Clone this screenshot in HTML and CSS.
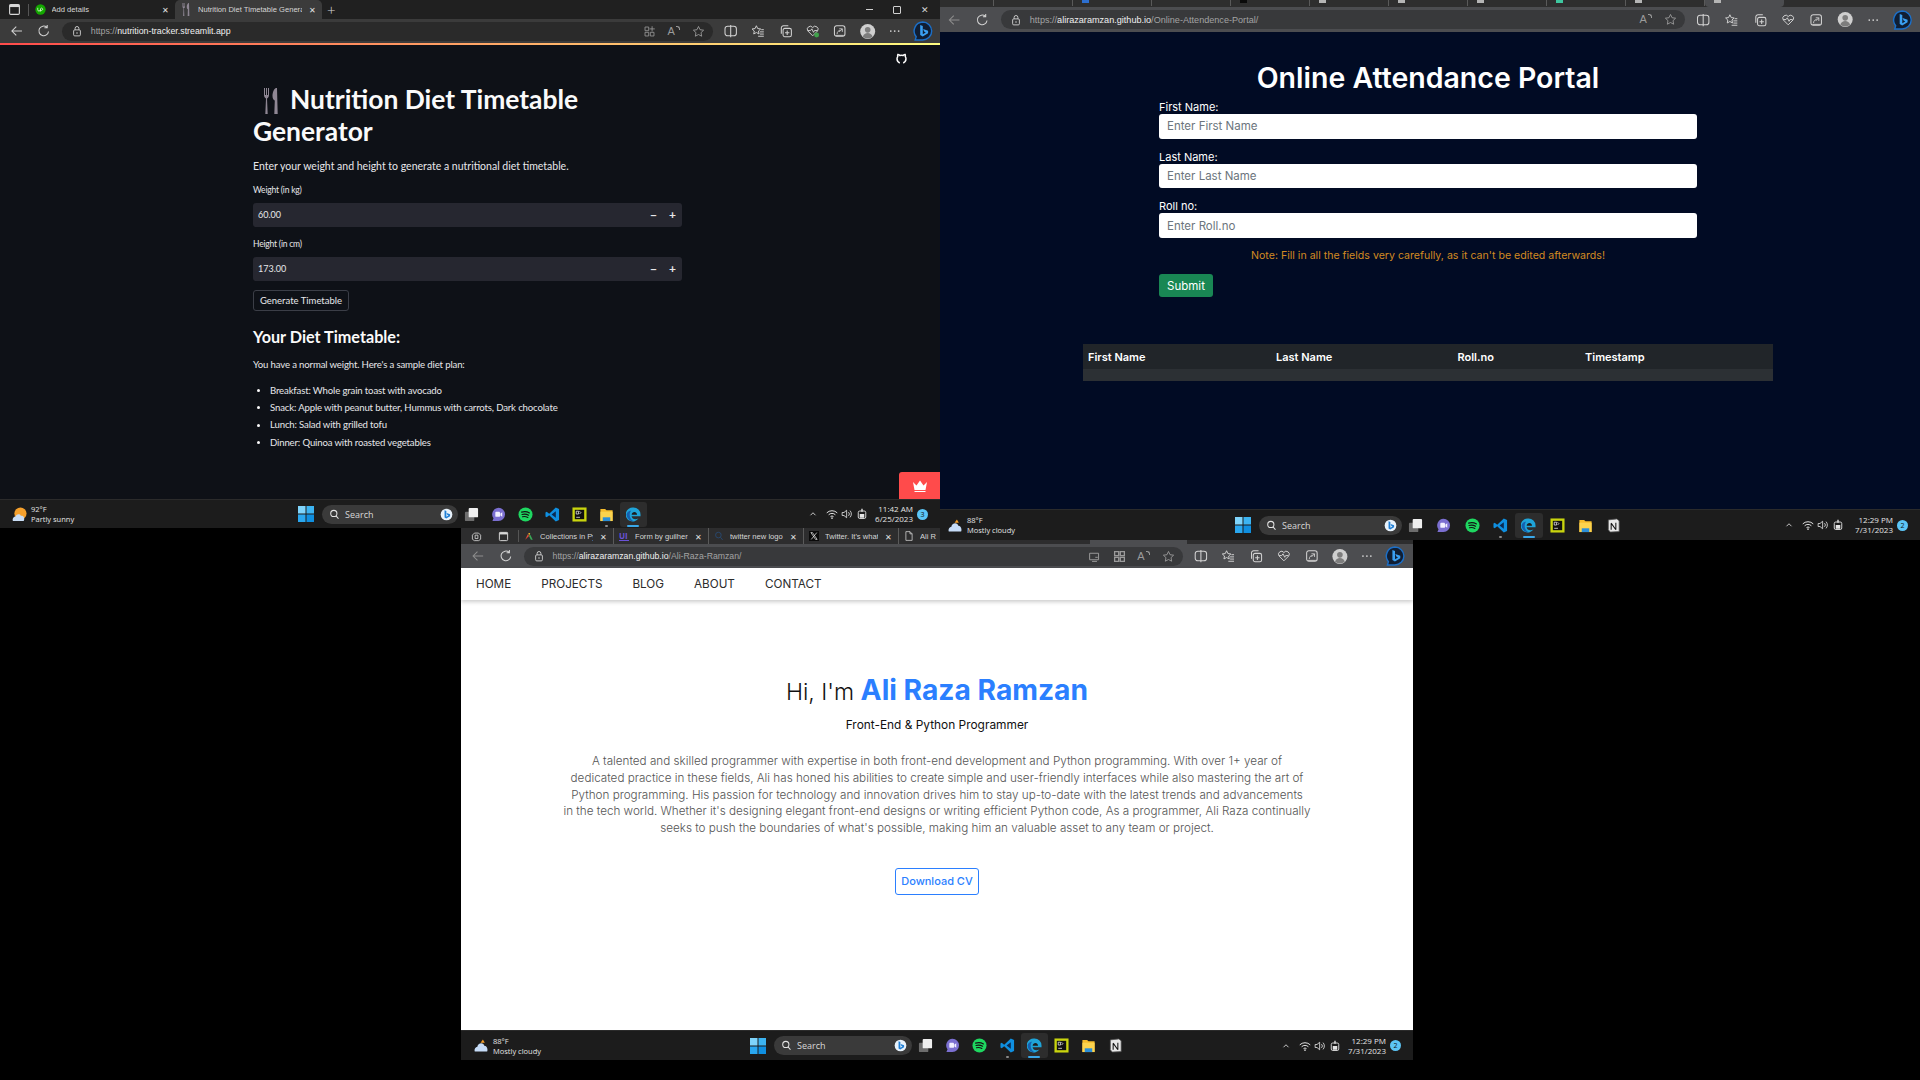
FILE: index.html
```html
<!DOCTYPE html>
<html lang="en">
<head>
    <meta charset="UTF-8">
    <meta name="viewport" content="width=device-width, initial-scale=1.0">
    <title>Project screenshots</title>
    <link rel="stylesheet" href="styles.css">
</head>
<body>
    <svg class="sprites" width="0" height="0">
        <symbol id="i-sidebar" viewBox="0 0 16 16"><rect x="2" y="2" width="12" height="12" rx="1.5" fill="none" stroke="currentColor" stroke-width="1.4"/><rect x="2" y="2" width="12" height="3" fill="currentColor"/></symbol>
        <symbol id="i-workspace" viewBox="0 0 16 16"><path d="M5 3h6l3 3v6l-3 2H5l-3-2V6z M6 6h4v5H6z" fill="none" stroke="currentColor" stroke-width="1.2"/></symbol>
        <symbol id="i-back" viewBox="0 0 16 16"><path d="M14 8H2.5M7.5 3L2.5 8l5 5" fill="none" stroke="currentColor" stroke-width="1.2"/></symbol>
        <symbol id="i-reload" viewBox="0 0 16 16"><path d="M13.5 8.5A5.5 5.5 0 1 1 11.5 3.6M12 1v3.2H8.8" fill="none" stroke="currentColor" stroke-width="1.2"/></symbol>
        <symbol id="i-lock" viewBox="0 0 16 16"><rect x="3.5" y="6.5" width="9" height="8" rx="1.5" fill="none" stroke="currentColor" stroke-width="1.2"/><path d="M5.5 6.5V4.5a2.5 2.5 0 0 1 5 0v2" fill="none" stroke="currentColor" stroke-width="1.2"/><circle cx="8" cy="10.5" r="1" fill="currentColor"/></symbol>
        <symbol id="i-apps" viewBox="0 0 16 16"><path d="M2.5 2.5h4.5v4.5h-4.5z M2.5 9h4.5v4.5h-4.5z M9 9h4.5v4.5H9z M11.2 1.5v6.5 M8 4.8h6.5" fill="none" stroke="currentColor" stroke-width="1"/></symbol>
        <symbol id="i-qr" viewBox="0 0 16 16"><path d="M2 2h5v5H2z M9 2h5v5H9z M2 9h5v5H2z M9 9h5v5H9z" fill="none" stroke="currentColor" stroke-width="1.6"/></symbol>
        <symbol id="i-cast" viewBox="0 0 16 16"><path d="M2 12V4h11v8z M5 14h6 M9 9h3" fill="none" stroke="currentColor" stroke-width="1.2"/></symbol>
        <symbol id="i-star" viewBox="0 0 16 16"><path d="M8 1.8l1.9 4 4.4.6-3.2 3 .8 4.4L8 11.7l-3.9 2.1.8-4.4-3.2-3 4.4-.6z" fill="none" stroke="currentColor" stroke-width="1.1" stroke-linejoin="round"/></symbol>
        <symbol id="i-split" viewBox="0 0 16 16"><rect x="1.5" y="2.5" width="13" height="11" rx="3" fill="none" stroke="currentColor" stroke-width="1.2"/><path d="M8 1v14" stroke="currentColor" stroke-width="1.2"/></symbol>
        <symbol id="i-favs" viewBox="0 0 16 16"><path d="M6.5 2l1.5 3.2 3.4.5-2.500 2.300.6 3.400-3-1.700-3 1.700.6-3.400L1.600 5.700 5 5.200z" fill="none" stroke="currentColor" stroke-width="1.1" stroke-linejoin="round"/><path d="M10.5 9h4.5 M10.5 11.5h4.5 M8.5 14h6.5 M12 6.5h3" stroke="currentColor" stroke-width="1.1"/></symbol>
        <symbol id="i-collect" viewBox="0 0 16 16"><path d="M3 11V4.5A2.5 2.5 0 0 1 5.5 2H11" fill="none" stroke="currentColor" stroke-width="1.2"/><rect x="5" y="5" width="9.5" height="9.5" rx="2" fill="none" stroke="currentColor" stroke-width="1.2"/><path d="M9.7 7.5v5 M7.2 10h5" stroke="currentColor" stroke-width="1.2"/></symbol>
        <symbol id="i-health" viewBox="0 0 16 16"><path d="M8 13.5L2.5 8A3.3 3.3 0 0 1 8 4a3.3 3.3 0 0 1 5.5 4z M2.500 7.500h3l1.500-2 2 4 1-2h3" fill="none" stroke="currentColor" stroke-width="1.1"/></symbol>
        <symbol id="i-health-on" viewBox="0 0 16 16"><path d="M8 13.5L2.5 8A3.3 3.3 0 0 1 8 4a3.3 3.3 0 0 1 5.5 4z M2.500 7.500h3l1.500-2 2 4 1-2h3" fill="none" stroke="currentColor" stroke-width="1.1"/><circle cx="12.5" cy="12.5" r="2.8" fill="#3fa14a"/></symbol>
        <symbol id="i-shot" viewBox="0 0 16 16"><rect x="2" y="2" width="12" height="12" rx="2.5" fill="none" stroke="currentColor" stroke-width="1.2"/><path d="M5 11.5c0-2.5 1.5-4 3.500-4 M7.500 5.500l3.500 0v3.500 M11 5.500L7.500 9 M3.500 13h9" fill="none" stroke="currentColor" stroke-width="1"/></symbol>
        <symbol id="i-avatar" viewBox="0 0 16 16"><circle cx="8" cy="8" r="8" fill="#cfcfcf"/><circle cx="8" cy="6.2" r="3" fill="#7d7d7d"/><path d="M2.8 13.5c.8-2.800 2.800-4 5.200-4s4.400 1.200 5.200 4A8 8 0 0 1 2.800 13.500z" fill="#7d7d7d"/></symbol>
        <symbol id="i-dots" viewBox="0 0 16 16"><circle cx="3.5" cy="8" r="1" fill="currentColor"/><circle cx="8" cy="8" r="1" fill="currentColor"/><circle cx="12.5" cy="8" r="1" fill="currentColor"/></symbol>
        <symbol id="i-bing" viewBox="0 0 20 20"><path d="M10 1a9 9 0 0 1 0 18H2.5l1-3.300A9 9 0 0 1 10 1z" fill="#101e33" stroke="#1b6fc8" stroke-width="1.4"/><path d="M7.5 4l2.600 1v8.200l3-1.800-1.700-.8-1-2.600 5 1.700v2.600l-5.400 3.200-2.500-1.400z" fill="#3aa0f2"/></symbol>
        <symbol id="i-bing-sm" viewBox="0 0 20 20"><circle cx="10" cy="10" r="9" fill="#e8f2fb"/><path d="M7 3.500l2.800 1v9l3.300-2-1.800-.9-1.100-2.800 5.300 1.800v2.900l-5.900 3.500-2.600-1.500z" fill="#1f7fd6"/></symbol>
        <symbol id="i-start" viewBox="0 0 16 16"><path d="M0 0h7.500v7.500H0z" fill="#7fd4fb"/><path d="M8.500 0H16v7.500H8.500z" fill="#3cb4f2"/><path d="M0 8.500h7.500V16H0z" fill="#2aa7ef"/><path d="M8.500 8.500H16V16H8.500z" fill="#0f8fe0"/></symbol>
        <symbol id="i-search" viewBox="0 0 16 16"><circle cx="7" cy="6.5" r="4.5" fill="none" stroke="currentColor" stroke-width="1.5"/><path d="M10.300 10l3.500 4.200" stroke="currentColor" stroke-width="1.5"/></symbol>
        <symbol id="i-taskview" viewBox="0 0 16 16"><rect x="1" y="5" width="10" height="10" rx="1" fill="#6d6d6d"/><rect x="5" y="1" width="10" height="10" rx="1" fill="#efefef"/></symbol>
        <symbol id="i-chat" viewBox="0 0 16 16"><path d="M8 .8a7 7 0 0 1 0 14H1.500l1.200-2.800A7 7 0 0 1 8 .8z" fill="#7b6fd0"/><rect x="4.6" y="5" width="5" height="5.5" rx="1" fill="#f2f0ff"/><path d="M10 7l2-1.300v4.600l-2-1.300z" fill="#f2f0ff"/></symbol>
        <symbol id="i-spotify" viewBox="0 0 16 16"><circle cx="8" cy="8" r="7.5" fill="#1ed760"/><path d="M3.800 5.500c2.800-.8 5.900-.6 8.400.8 M4.300 8c2.300-.6 4.900-.4 7 .8 M4.800 10.400c1.900-.5 3.900-.3 5.700.7" fill="none" stroke="#121212" stroke-width="1.2" stroke-linecap="round"/></symbol>
        <symbol id="i-vscode" viewBox="0 0 16 16"><path d="M11.500.5L15 2.200v11.600l-3.500 1.700-7-6.700L1.800 11 .5 10.200V5.800L1.800 5l2.700 2.200z" fill="#0f8fe0"/><path d="M11.500 4.500L7 8l4.500 3.500z" fill="#0b2a52"/></symbol>
        <symbol id="i-edge" viewBox="0 0 16 16"><path d="M8 .5a7.500 7.500 0 0 1 7.500 7.500v1.800H6c.2 2 2 3.200 4 3.200 1.200 0 2.400-.3 3.400-.9A7.500 7.500 0 1 1 8 .5z" fill="#1fa4d8"/><path d="M6 8.300c.2-2 1.500-3 3-3s2.600.8 2.800 3z" fill="#1c1c1c"/><path d="M.6 8C1.300 5 3.500 3.700 5.500 4 3.600 5.800 3.300 10 5.400 13c1 1.400 2.500 2 3.600 2.400A7.500 7.500 0 0 1 .6 8z" fill="#1460b0"/></symbol>
        <symbol id="i-pycharm" viewBox="0 0 16 16"><rect x=".5" y=".5" width="15" height="15" fill="#c9d40e"/><rect x="3" y="3" width="10" height="10" fill="#101010"/><path d="M4.500 4.500h2.500v3H4.500z M8 4.500l1.500 1.500L8 7.500 M4.500 11h4" fill="none" stroke="#f2f2f2" stroke-width=".8"/></symbol>
        <symbol id="i-files" viewBox="0 0 16 16"><path d="M1.500 2h5l1.500 1.500h6.500V15h-13z" fill="#f6bc2c"/><rect x="1.5" y="5" width="13" height="10" fill="#fcd34e"/><rect x="4" y="11" width="8" height="4" fill="#2b8fd9"/></symbol>
        <symbol id="i-notion" viewBox="0 0 16 16"><path d="M2.500 2l9-1 2.500 2v11.500l-9.500.5-2-2.500z" fill="#e8e8e8" stroke="#555" stroke-width=".8"/><path d="M5.500 5.500v7 M5.500 5.500l5 7 M10.500 5v7.500" fill="none" stroke="#111" stroke-width="1.1"/></symbol>
        <symbol id="i-sun" viewBox="0 0 16 16"><circle cx="9" cy="7" r="6.5" fill="#f5a02c"/><path d="M1 15c-1-3 1-5 3-5 .5-2.500 4.500-3 5.500-.5 3-.5 4.500 2.500 3 5.500z" fill="#c9ddf5"/></symbol>
        <symbol id="i-cloud" viewBox="0 0 16 16"><path d="M9.500 1.500l2 3.500H7z" fill="#f5a02c"/><path d="M.8 14.500c-.8-3 1-5 2.800-5.200C4 5.500 9.500 4 11 8.200c2.500-.2 4.200 3.500 3 6.300z" fill="#c6dcf8"/></symbol>
        <symbol id="i-chevron" viewBox="0 0 16 16"><path d="M3 10.500L8 5.500l5 5" fill="none" stroke="currentColor" stroke-width="1.7"/></symbol>
        <symbol id="i-wifi" viewBox="0 0 16 16"><path d="M1 6.500a10 10 0 0 1 14 0 M3.500 9a6.500 6.500 0 0 1 9 0 M6 11.500a3 3 0 0 1 4 0" fill="none" stroke="currentColor" stroke-width="1.3"/><circle cx="8" cy="13.5" r="1.1" fill="currentColor"/></symbol>
        <symbol id="i-volume" viewBox="0 0 16 16"><path d="M1.500 6v4h2.500l3.500 3V3L4 6z" fill="none" stroke="currentColor" stroke-width="1.1"/><path d="M10 5.500a3.500 3.500 0 0 1 0 5 M12 3.500a6.500 6.500 0 0 1 0 9" fill="none" stroke="currentColor" stroke-width="1.1"/></symbol>
        <symbol id="i-battery" viewBox="0 0 16 16"><rect x="3" y="4" width="10" height="10" rx="2" fill="none" stroke="currentColor" stroke-width="1.2"/><rect x="5" y="8" width="6" height="5" fill="currentColor"/><path d="M8 1v4" stroke="currentColor" stroke-width="1.8"/></symbol>
        <symbol id="i-fork" viewBox="0 0 20 26"><path d="M2 0v7c0 2 1 3 2 3.500L3.300 26h2.400L5 10.500C6 10 7 9 7 7V0H6v7H5V0H4v7H3V0z" fill="#8f8794"/><path d="M14 0c-2.500 1-3.500 5-3.500 8 0 2.500 1 4 2.300 4.500L12.300 26h3.400L15 0z" fill="#8f8794"/></symbol>
        <symbol id="i-github" viewBox="0 0 16 16"><path d="M5.500 14.500C3 13.500 1.500 11 1.500 8.500c0-1.200.4-2.300 1-3.200-.2-1-.1-2.200.2-3 1 0 2 .5 2.800 1.200a9 9 0 0 1 5 0c.8-.7 1.800-1.200 2.800-1.200.3.8.4 2 .2 3 .6.9 1 2 1 3.200 0 2.500-1.500 5-4 6" fill="none" stroke="currentColor" stroke-width="2.2"/></symbol>
        <symbol id="i-crown" viewBox="0 0 16 12"><path d="M1 2l3.500 3.500L8 .5l3.500 5L15 2l-1.500 8h-11z M2.500 11h11v1h-11z" fill="currentColor"/></symbol>
        <symbol id="i-upwork" viewBox="0 0 16 16"><circle cx="8" cy="8" r="7.5" fill="#14a800"/><path d="M4 5.500v3a1.800 1.800 0 0 0 3.600 0M8 11V6.800a1.700 1.700 0 1 1 .2 2" fill="none" stroke="#fff" stroke-width="1"/></symbol>
        <symbol id="i-gcolor" viewBox="0 0 16 16"><path d="M2 14L6 5l2 3z" fill="#e34a3a"/><path d="M7 3h3l-2 5z" fill="#f5b52e"/><path d="M8 8l3 6h3L10 6z" fill="#3aa757"/></symbol>
        <symbol id="i-doc" viewBox="0 0 16 16"><path d="M3 1h6.500L13 4.500V15H3z M9.500 1v3.500H13" fill="none" stroke="currentColor" stroke-width="1.2"/></symbol>
        <symbol id="i-x" viewBox="0 0 16 16"><rect width="16" height="16" fill="#0a0a0a"/><path d="M3 2.500h2.500l7.500 11h-2.500z M12.500 2.500L3.500 13.500" fill="none" stroke="#f2f2f2" stroke-width="1.1"/></symbol>
    </svg>

    <!-- top left: streamlit app -->
    <section class="window win-diet">
        <div class="tabstrip">
            <svg class="ico tabstrip-ico"><use href="#i-sidebar"/></svg>
            <span class="tab-divider"></span>
            <div class="tab"><svg class="favicon"><use href="#i-upwork"/></svg><span class="tab-title">Add details</span><span class="tab-close">✕</span></div>
            <div class="tab tab-active"><svg class="favicon favicon-fork"><use href="#i-fork"/></svg><span class="tab-title">Nutrition Diet Timetable Genera</span><span class="tab-close">✕</span></div>
            <span class="tab-new">+</span>
            <div class="window-controls">
                <span class="win-min"></span>
                <span class="win-max"></span>
                <span class="win-close">✕</span>
            </div>
        </div>
        <div class="toolbar">
            <svg class="tool"><use href="#i-back"/></svg>
            <svg class="tool"><use href="#i-reload"/></svg>
            <div class="address">
                <svg class="ico address-lock"><use href="#i-lock"/></svg>
                <span class="url"><span class="url-dim">https://</span>nutrition-tracker.streamlit.app</span>
                <div class="address-tools">
                    <svg class="ico"><use href="#i-apps"/></svg>
                    <span class="read">A</span>
                    <svg class="ico"><use href="#i-star"/></svg>
                </div>
            </div>
            <svg class="tool"><use href="#i-split"/></svg>
            <svg class="tool"><use href="#i-favs"/></svg>
            <svg class="tool"><use href="#i-collect"/></svg>
            <svg class="tool"><use href="#i-health-on"/></svg>
            <svg class="tool"><use href="#i-shot"/></svg>
            <svg class="tool tool-avatar"><use href="#i-avatar"/></svg>
            <svg class="tool"><use href="#i-dots"/></svg>
            <svg class="tool tool-bing"><use href="#i-bing"/></svg>
        </div>
        <div class="st-decoration"></div>
        <main class="st-page">
            <svg class="st-github"><use href="#i-github"/></svg>
            <h1 class="st-title"><svg class="st-fork"><use href="#i-fork"/></svg>Nutrition Diet Timetable Generator</h1>
            <p class="st-text st-intro">Enter your weight and height to generate a nutritional diet timetable.</p>
            <label class="st-label">Weight (in kg)</label>
            <div class="st-number"><span class="st-value">60.00</span><span class="st-step">−</span><span class="st-step">+</span></div>
            <label class="st-label">Height (in cm)</label>
            <div class="st-number"><span class="st-value">173.00</span><span class="st-step">−</span><span class="st-step">+</span></div>
            <button class="st-button">Generate Timetable</button>
            <h2 class="st-heading">Your Diet Timetable:</h2>
            <p class="st-text st-plan">You have a normal weight. Here's a sample diet plan:</p>
            <ul class="st-list">
                <li>Breakfast: Whole grain toast with avocado</li>
                <li>Snack: Apple with peanut butter, Hummus with carrots, Dark chocolate</li>
                <li>Lunch: Salad with grilled tofu</li>
                <li>Dinner: Quinoa with roasted vegetables</li>
            </ul>
            <div class="st-manage"><svg class="st-crown"><use href="#i-crown"/></svg></div>
        </main>
        <div class="taskbar">
            <div class="weather"><svg class="weather-ico"><use href="#i-sun"/></svg><div class="weather-text"><span>92°F</span><span>Partly sunny</span></div></div>
            <svg class="start"><use href="#i-start"/></svg>
            <div class="search"><svg class="search-ico"><use href="#i-search"/></svg><span class="search-text">Search</span><svg class="search-bing"><use href="#i-bing-sm"/></svg></div>
            <span class="pin"><svg><use href="#i-taskview"/></svg></span>
            <span class="pin"><svg><use href="#i-chat"/></svg></span>
            <span class="pin"><svg><use href="#i-spotify"/></svg></span>
            <span class="pin"><svg><use href="#i-vscode"/></svg></span>
            <span class="pin"><svg><use href="#i-pycharm"/></svg></span>
            <span class="pin pin-open"><svg><use href="#i-files"/></svg></span>
            <span class="pin pin-active"><svg><use href="#i-edge"/></svg></span>
            <div class="tray">
                <svg class="tray-ico tray-chevron"><use href="#i-chevron"/></svg>
                <svg class="tray-ico"><use href="#i-wifi"/></svg>
                <svg class="tray-ico"><use href="#i-volume"/></svg>
                <svg class="tray-ico"><use href="#i-battery"/></svg>
                <div class="clock"><span>11:42 AM</span><span>6/25/2023</span></div>
                <span class="notify">3</span>
            </div>
        </div>
    </section>

    <!-- top right: attendance portal -->
    <section class="window win-portal">
        <div class="tabstrip tabstrip-cut">
            <span class="cut-start"></span>
            <span class="cut-tab"></span>
            <span class="cut-tab"><span class="cut-ico cut-blue"></span></span>
            <span class="cut-tab"></span>
            <span class="cut-tab"><span class="cut-ico cut-black"></span></span>
            <span class="cut-tab"><span class="cut-ico"></span></span>
            <span class="cut-tab"><span class="cut-ico"></span></span>
            <span class="cut-tab"><span class="cut-ico"></span></span>
            <span class="cut-tab"><span class="cut-ico cut-green"></span></span>
            <span class="cut-tab"><span class="cut-ico"></span></span>
            <span class="cut-active"><span class="cut-ico"></span></span>
        </div>
        <div class="toolbar">
            <svg class="tool tool-dim"><use href="#i-back"/></svg>
            <svg class="tool"><use href="#i-reload"/></svg>
            <div class="address">
                <svg class="ico address-lock"><use href="#i-lock"/></svg>
                <span class="url"><span class="url-dim">https://</span>alirazaramzan.github.io<span class="url-dim">/Online-Attendence-Portal/</span></span>
                <div class="address-tools">
                    <span class="read">A</span>
                    <svg class="ico"><use href="#i-star"/></svg>
                </div>
            </div>
            <svg class="tool"><use href="#i-split"/></svg>
            <svg class="tool"><use href="#i-favs"/></svg>
            <svg class="tool"><use href="#i-collect"/></svg>
            <svg class="tool"><use href="#i-health"/></svg>
            <svg class="tool"><use href="#i-shot"/></svg>
            <svg class="tool tool-avatar"><use href="#i-avatar"/></svg>
            <svg class="tool"><use href="#i-dots"/></svg>
            <svg class="tool tool-bing"><use href="#i-bing"/></svg>
        </div>
        <main class="portal">
            <h1 class="portal-title">Online Attendance Portal</h1>
            <form class="portal-form">
                <label class="portal-label" for="first">First Name:</label>
                <input class="portal-input" id="first" type="text" placeholder="Enter First Name">
                <label class="portal-label" for="last">Last Name:</label>
                <input class="portal-input" id="last" type="text" placeholder="Enter Last Name">
                <label class="portal-label" for="roll">Roll no:</label>
                <input class="portal-input" id="roll" type="text" placeholder="Enter Roll.no">
                <p class="portal-note">Note: Fill in all the fields very carefully, as it can't be edited afterwards!</p>
                <button class="portal-submit" type="button">Submit</button>
            </form>
            <table class="portal-table">
                <thead>
                    <tr><th class="col-first">First Name</th><th class="col-last">Last Name</th><th class="col-roll">Roll.no</th><th>Timestamp</th></tr>
                </thead>
                <tbody>
                    <tr><td></td><td></td><td></td><td></td></tr>
                </tbody>
            </table>
        </main>
        <div class="taskbar">
            <div class="weather"><svg class="weather-ico"><use href="#i-cloud"/></svg><div class="weather-text"><span>88°F</span><span>Mostly cloudy</span></div></div>
            <svg class="start"><use href="#i-start"/></svg>
            <div class="search"><svg class="search-ico"><use href="#i-search"/></svg><span class="search-text">Search</span><svg class="search-bing"><use href="#i-bing-sm"/></svg></div>
            <span class="pin"><svg><use href="#i-taskview"/></svg></span>
            <span class="pin"><svg><use href="#i-chat"/></svg></span>
            <span class="pin"><svg><use href="#i-spotify"/></svg></span>
            <span class="pin pin-open"><svg><use href="#i-vscode"/></svg></span>
            <span class="pin pin-active"><svg><use href="#i-edge"/></svg></span>
            <span class="pin"><svg><use href="#i-pycharm"/></svg></span>
            <span class="pin"><svg><use href="#i-files"/></svg></span>
            <span class="pin"><svg><use href="#i-notion"/></svg></span>
            <div class="tray">
                <svg class="tray-ico tray-chevron"><use href="#i-chevron"/></svg>
                <svg class="tray-ico"><use href="#i-wifi"/></svg>
                <svg class="tray-ico"><use href="#i-volume"/></svg>
                <svg class="tray-ico"><use href="#i-battery"/></svg>
                <div class="clock"><span>12:29 PM</span><span>7/31/2023</span></div>
                <span class="notify">2</span>
            </div>
        </div>
    </section>

    <!-- bottom: portfolio -->
    <section class="window win-folio">
        <div class="tabstrip tabstrip-folio">
            <svg class="ico tabstrip-ico"><use href="#i-workspace"/></svg>
            <svg class="ico tabstrip-ico"><use href="#i-sidebar"/></svg>
            <span class="tab-divider"></span>
            <div class="tab"><svg class="favicon"><use href="#i-gcolor"/></svg><span class="tab-title">Collections in Py</span><span class="tab-close">✕</span></div>
            <div class="tab"><span class="favicon-ui">UI</span><span class="tab-title">Form by guilherm</span><span class="tab-close">✕</span></div>
            <div class="tab"><svg class="favicon favicon-dim"><use href="#i-search"/></svg><span class="tab-title">twitter new logo</span><span class="tab-close">✕</span></div>
            <div class="tab"><svg class="favicon"><use href="#i-x"/></svg><span class="tab-title">Twitter. It's what</span><span class="tab-close">✕</span></div>
            <div class="tab tab-last"><svg class="favicon"><use href="#i-doc"/></svg><span class="tab-title">Ali R</span></div>
            <span class="folio-tab-gap"></span>
            <span class="folio-tab-active"></span>
        </div>
        <div class="toolbar">
            <svg class="tool tool-dim"><use href="#i-back"/></svg>
            <svg class="tool"><use href="#i-reload"/></svg>
            <div class="address">
                <svg class="ico address-lock"><use href="#i-lock"/></svg>
                <span class="url"><span class="url-dim">https://</span>alirazaramzan.github.io<span class="url-dim">/Ali-Raza-Ramzan/</span></span>
                <div class="address-tools">
                    <svg class="ico"><use href="#i-cast"/></svg>
                    <svg class="ico"><use href="#i-qr"/></svg>
                    <span class="read">A</span>
                    <svg class="ico"><use href="#i-star"/></svg>
                </div>
            </div>
            <svg class="tool"><use href="#i-split"/></svg>
            <svg class="tool"><use href="#i-favs"/></svg>
            <svg class="tool"><use href="#i-collect"/></svg>
            <svg class="tool"><use href="#i-health"/></svg>
            <svg class="tool"><use href="#i-shot"/></svg>
            <svg class="tool tool-avatar"><use href="#i-avatar"/></svg>
            <svg class="tool"><use href="#i-dots"/></svg>
            <svg class="tool tool-bing"><use href="#i-bing"/></svg>
        </div>
        <main class="folio">
            <nav class="folio-nav">
                <a href="#">HOME</a>
                <a href="#">PROJECTS</a>
                <a href="#">BLOG</a>
                <a href="#">ABOUT</a>
                <a href="#">CONTACT</a>
            </nav>
            <h1 class="folio-hi">Hi, I'm <span class="folio-name">Ali Raza Ramzan</span></h1>
            <p class="folio-role">Front-End &amp; Python Programmer</p>
            <p class="folio-bio">A talented and skilled programmer with expertise in both front-end development and Python programming. With over 1+ year of<br>
                dedicated practice in these fields, Ali has honed his abilities to create simple and user-friendly interfaces while also mastering the art of<br>
                Python programming. His passion for technology and innovation drives him to stay up-to-date with the latest trends and advancements<br>
                in the tech world. Whether it's designing elegant front-end designs or writing efficient Python code, As a programmer, Ali Raza continually<br>
                seeks to push the boundaries of what's possible, making him an valuable asset to any team or project.</p>
            <a class="folio-cv" href="#">Download CV</a>
        </main>
        <div class="taskbar">
            <div class="weather"><svg class="weather-ico"><use href="#i-cloud"/></svg><div class="weather-text"><span>88°F</span><span>Mostly cloudy</span></div></div>
            <svg class="start"><use href="#i-start"/></svg>
            <div class="search"><svg class="search-ico"><use href="#i-search"/></svg><span class="search-text">Search</span><svg class="search-bing"><use href="#i-bing-sm"/></svg></div>
            <span class="pin"><svg><use href="#i-taskview"/></svg></span>
            <span class="pin"><svg><use href="#i-chat"/></svg></span>
            <span class="pin"><svg><use href="#i-spotify"/></svg></span>
            <span class="pin pin-open"><svg><use href="#i-vscode"/></svg></span>
            <span class="pin pin-active"><svg><use href="#i-edge"/></svg></span>
            <span class="pin"><svg><use href="#i-pycharm"/></svg></span>
            <span class="pin"><svg><use href="#i-files"/></svg></span>
            <span class="pin"><svg><use href="#i-notion"/></svg></span>
            <div class="tray">
                <svg class="tray-ico tray-chevron"><use href="#i-chevron"/></svg>
                <svg class="tray-ico"><use href="#i-wifi"/></svg>
                <svg class="tray-ico"><use href="#i-volume"/></svg>
                <svg class="tray-ico"><use href="#i-battery"/></svg>
                <div class="clock"><span>12:29 PM</span><span>7/31/2023</span></div>
                <span class="notify">2</span>
            </div>
        </div>
    </section>
</body>
</html>
```

FILE: styles.css
```css
body {
    margin: 0;
    width: 1920px;
    height: 1080px;
    overflow: hidden;
    background-color: #000;
    font-family: "Open Sans", sans-serif;
}
.sprites {
    position: absolute;
}

/* the three browser windows sit on a free desktop */
.window {
    position: absolute;
    display: flex;
    flex-direction: column;
    overflow: hidden;
}
.win-diet {
    left: 0;
    top: 0;
    width: 940px;
    height: 528px;
    z-index: 2;
    --slot: 27.4px;
    --toolbar: #3b3b3b;
    --pill: #2a2a2a;
    --weather: 298px;
    --search: 135.5px;
    --pin: 27px;
    --url: 8.8px;
}
.win-portal {
    left: 940px;
    top: 0;
    width: 980px;
    height: 540px;
    z-index: 3;
    --slot: 28.4px;
    --toolbar: #4c4d50;
    --pill: #38393b;
    --weather: 295px;
    --search: 142.5px;
    --pin: 28.3px;
    --url: 9.1px;
}
.win-folio {
    left: 461px;
    top: 528px;
    width: 952px;
    height: 532px;
    z-index: 1;
    --slot: 27.8px;
    --toolbar: #4c4d50;
    --pill: #38393b;
    --weather: 289px;
    --search: 138px;
    --pin: 27.2px;
    --url: 8.7px;
}

/* tabs */
.tabstrip {
    flex: none;
    height: 19px;
    display: flex;
    align-items: center;
    background-color: #202020;
    color: #d6d6d6;
    font-size: 7.6px;
}
.tabstrip-ico {
    width: 13px;
    height: 13px;
    margin-left: 8px;
    color: #d8d8d8;
}
.tab-divider {
    width: 1px;
    height: 12px;
    margin: 0 1.5px 0 7px;
    background-color: #555;
}
.tab {
    width: 144.5px;
    height: 19px;
    display: flex;
    align-items: center;
    padding-left: 4px;
    box-sizing: border-box;
    flex: none;
}
.tab-active {
    width: 147px;
    padding-left: 6px;
    background-color: var(--toolbar);
    border-radius: 5px 5px 0 0;
}
.favicon {
    width: 11px;
    height: 11px;
    flex: none;
    margin-right: 6px;
}
.favicon-fork {
    height: 13px;
}
.favicon-dim {
    color: #27486e;
}
.tab-title {
    flex: 1;
    overflow: hidden;
    white-space: nowrap;
    font-family: "Liberation Sans", sans-serif;
}
.tab-close {
    flex: none;
    width: 20px;
    text-align: center;
    font-size: 8px;
    color: #e0e0e0;
}
.tab-new {
    margin-left: 5px;
    font-size: 15px;
    font-weight: 300;
}
.window-controls {
    margin-left: auto;
    display: flex;
    align-items: center;
    margin-right: 11px;
}
.win-min {
    width: 7px;
    height: 1px;
    background-color: #d0d0d0;
}
.win-max {
    width: 6px;
    height: 6px;
    margin: 0 20px;
    border: 1px solid #d0d0d0;
    border-radius: 1px;
}
.win-close {
    font-size: 9px;
}
.tabstrip-cut {
    height: 7px;
    background-color: #2e2e2e;
    align-items: stretch;
}
.cut-start {
    flex: none;
    width: 54px;
    box-sizing: border-box;
    border-right: 1px solid #5a5a5a;
    margin-bottom: 1px;
}
.cut-tab {
    flex: none;
    width: 79px;
    box-sizing: border-box;
    border-right: 1px solid #5a5a5a;
    margin-bottom: 1px;
}
.cut-active {
    flex: none;
    width: 79px;
    background-color: var(--toolbar);
    border-radius: 0 0 4px 4px;
}
.cut-ico {
    display: block;
    width: 7px;
    height: 3px;
    margin-left: 9px;
    background-color: #b5b5b5;
}
.cut-blue {
    background-color: #2d6fd0;
}
.cut-black {
    background-color: #0a0a0a;
}
.cut-green {
    background-color: #3ec7a0;
}
.tabstrip-folio {
    height: 16px;
    background-color: #2d2d2e;
}
.tabstrip-folio .tabstrip-ico {
    width: 11px;
    height: 11px;
    margin-left: 10px;
}
.tabstrip-folio .tabstrip-ico + .tabstrip-ico {
    margin-left: 15.5px;
}
.tabstrip-folio .tab-divider {
    margin: 0 0 0 9.5px;
}
.tabstrip-folio .tab {
    width: 95px;
    height: 16px;
    padding-left: 5px;
    border-right: 1px solid #5a5a5a;
}
.tabstrip-folio .tab-last {
    border-right: none;
}
.tabstrip-folio .favicon {
    width: 10px;
    height: 10px;
    margin-right: 6px;
}
.favicon-ui {
    flex: none;
    width: 10px;
    margin-right: 6px;
    color: #6a52d8;
    font-size: 8px;
    font-weight: 700;
    border-bottom: 1px solid #6a52d8;
    line-height: 8px;
}
.folio-tab-gap {
    width: 96px;
    flex: none;
}
.folio-tab-active {
    width: 97px;
    height: 16px;
    flex: none;
    background-color: var(--toolbar);
}

/* address bar row */
.toolbar {
    flex: none;
    height: 24px;
    display: flex;
    align-items: center;
    padding: 0 4px 0 3px;
    background-color: var(--toolbar);
    color: #d2d2d2;
}
.win-portal .toolbar {
    height: 25px;
    padding-left: 0;
}
.tool {
    flex: none;
    width: var(--slot);
    height: 14px;
}
.tool-dim {
    color: #8d8d8d;
}
.tool-avatar {
    height: 15px;
}
.tool-bing {
    height: 20px;
}
.address {
    flex: 1;
    height: 19px;
    margin: 0 4px;
    display: flex;
    align-items: center;
    background-color: var(--pill);
    border-radius: 10px;
    padding-left: 9px;
}
.ico {
    flex: none;
    width: 13px;
    height: 13px;
}
.address-lock {
    width: 12px;
    height: 12px;
    margin-right: 8px;
}
.url {
    font-family: "Liberation Sans", sans-serif;
    font-size: var(--url);
    color: #f0f0f0;
    white-space: nowrap;
}
.url-dim {
    color: #a3a3a3;
}
.address-tools {
    margin-left: auto;
    display: flex;
    align-items: center;
    gap: 11.5px;
    padding-right: 8px;
    color: #9b9b9b;
}
.read {
    position: relative;
    flex: none;
    width: 13px;
    font-family: "Liberation Sans", sans-serif;
    font-size: 11px;
    line-height: 13px;
}
.read::after {
    content: "";
    position: absolute;
    right: 0;
    top: 1px;
    width: 3px;
    height: 3px;
    border-top: 1px solid #9b9b9b;
    border-right: 1px solid #9b9b9b;
    border-radius: 0 3px 0 0;
}

/* streamlit page */
.st-decoration {
    flex: none;
    height: 2px;
    background-image: linear-gradient(90deg, #ff4b4b, #fffd80);
}
.st-page {
    position: relative;
    flex: 1;
    background-color: #0e1117;
    padding: 38px 258px 0 253px;
    color: #e7e7ea;
    font-family: Lato, sans-serif;
}
.st-github {
    position: absolute;
    right: 33px;
    top: 8px;
    width: 11px;
    height: 11px;
    color: #fafafa;
}
.st-manage {
    position: absolute;
    right: 0;
    bottom: 0;
    width: 41px;
    height: 27px;
    display: flex;
    align-items: center;
    justify-content: center;
    background-color: #ff4b4b;
    border-radius: 3px 0 0 0;
    color: #fff;
}
.st-crown {
    width: 16px;
    height: 12px;
}
.st-title {
    margin: 0;
    font-size: 26.4px;
    line-height: 32px;
    font-weight: 700;
    color: #fafafa;
}
.st-fork {
    width: 20px;
    height: 26px;
    margin: 0 8px 0 9px;
    vertical-align: -5px;
}
.st-text {
    margin: 0;
    font-size: 10.5px;
    line-height: 14px;
}
.st-intro {
    margin-top: 11.5px;
}
.st-label {
    display: block;
    margin: 11px 0 7px;
    font-size: 8.5px;
    line-height: 12px;
    letter-spacing: -0.2px;
}
.st-number {
    height: 24px;
    display: flex;
    align-items: center;
    padding-left: 5px;
    background-color: #262730;
    border-radius: 3px;
    font-size: 9px;
}
.st-value {
    flex: 1;
}
.st-step {
    width: 19px;
    text-align: center;
    font-size: 12px;
    font-weight: 700;
}
.st-button {
    display: block;
    width: 96px;
    height: 21px;
    margin-top: 9px;
    padding: 0;
    background-color: #0e1117;
    border: 1px solid #3b3e47;
    border-radius: 3px;
    color: #e7e7ea;
    font-family: Lato, sans-serif;
    font-size: 9.5px;
}
.st-heading {
    margin: 15px 0 0;
    font-size: 16.2px;
    line-height: 22px;
    font-weight: 700;
    color: #fafafa;
}
.st-plan {
    margin-top: 10px;
    font-size: 9.6px;
    letter-spacing: -0.15px;
}
.st-list {
    margin: 12px 0 0;
    padding: 0 0 0 17px;
    list-style: none;
    font-size: 9.6px;
    letter-spacing: -0.15px;
}
.st-list li {
    display: flex;
    align-items: center;
    line-height: 14px;
    margin-bottom: 3.4px;
}
.st-list li::before {
    content: "";
    flex: none;
    width: 3px;
    height: 3px;
    margin: 0 10px 0 -13px;
    border-radius: 50%;
    background-color: #fafafa;
}

/* attendance portal */
.portal {
    flex: 1;
    background-color: #010b24;
    padding-top: 29px;
    color: #fff;
    font-family: Inter, sans-serif;
}
.portal-title {
    margin: 0;
    padding-right: 4px;
    font-size: 28.5px;
    line-height: 34px;
    font-weight: 600;
    text-align: center;
}
.portal-form {
    width: 538px;
    margin: 5px 0 0 219px;
}
.portal-label {
    display: block;
    margin-top: 11px;
    font-size: 11px;
    line-height: 14px;
}
.portal-label:first-child {
    margin-top: 0;
}
.portal-input {
    display: block;
    width: 100%;
    height: 24.7px;
    box-sizing: border-box;
    border: none;
    border-radius: 3px;
    padding: 0 8px;
    background-color: #fff;
    font-family: Inter, sans-serif;
    font-size: 11.5px;
}
.portal-input::placeholder {
    color: #6c757d;
}
.portal-note {
    margin: 10px 0 0;
    font-size: 10.6px;
    line-height: 16px;
    text-align: center;
    color: #d18a22;
}
.portal-submit {
    display: block;
    width: 54px;
    height: 23px;
    margin-top: 10px;
    padding: 0;
    background-color: #198754;
    border: none;
    border-radius: 3px;
    color: #fff;
    font-family: Inter, sans-serif;
    font-size: 11.5px;
}
.portal-table {
    width: 690px;
    margin: 47px 0 0 143px;
    border-collapse: collapse;
    table-layout: fixed;
}
.portal-table th {
    height: 25px;
    padding: 0 5px;
    background-color: #212529;
    font-size: 11px;
    font-weight: 600;
    text-align: left;
}
.portal-table td {
    height: 12px;
    padding: 0;
    background-color: #2c3034;
}
.col-first {
    width: 178px;
}
.col-last {
    width: 171.5px;
}
.col-roll {
    width: 117.5px;
}

/* portfolio page */
.folio {
    flex: 1;
    display: flex;
    flex-direction: column;
    align-items: center;
    background-color: #fff;
    font-family: Inter, sans-serif;
    color: #111;
}
.folio-nav {
    align-self: stretch;
    flex: none;
    height: 32px;
    display: flex;
    align-items: center;
    gap: 30px;
    padding-left: 15px;
    box-shadow: 0 2px 4px rgba(0, 0, 0, 0.2);
}
.folio-nav a {
    font-size: 11.7px;
    color: #2c2c2c;
    text-decoration: none;
}
.folio-hi {
    margin: 72px 0 0;
    font-size: 23px;
    line-height: 36px;
    font-weight: 300;
    color: #111;
}
.folio-name {
    font-size: 28.2px;
    font-weight: 700;
    color: #2b7fff;
}
.folio-role {
    margin: 7px 0 0;
    font-size: 11.9px;
    line-height: 16px;
}
.folio-bio {
    margin: 20px 0 0;
    font-size: 11.7px;
    line-height: 16.75px;
    font-weight: 300;
    text-align: center;
    color: #555;
    white-space: nowrap;
}
.folio-cv {
    width: 84px;
    height: 27px;
    margin-top: 31px;
    box-sizing: border-box;
    display: flex;
    align-items: center;
    justify-content: center;
    border: 1px solid #2b7fff;
    border-radius: 3px;
    color: #2b7fff;
    font-size: 11px;
    font-weight: 500;
    text-decoration: none;
}

/* windows taskbar */
.taskbar {
    flex: none;
    height: 30px;
    display: flex;
    align-items: center;
    background-color: #1c1c1c;
    border-top: 1px solid #2b2b2b;
    box-sizing: border-box;
    color: #e4e4e4;
}
.win-diet .taskbar {
    height: 29px;
}
.win-portal .taskbar {
    height: 31px;
}
.weather {
    flex: none;
    width: var(--weather);
    box-sizing: border-box;
    padding-left: 12px;
    display: flex;
    align-items: center;
    gap: 4px;
}
.win-portal .weather {
    padding-left: 8px;
}
.win-folio .weather {
    padding-left: 13px;
}
.weather-ico {
    width: 15px;
    height: 15px;
    flex: none;
}
.weather-text {
    display: flex;
    flex-direction: column;
    font-size: 7.5px;
    line-height: 10px;
}
.start {
    flex: none;
    width: 16px;
    height: 16px;
}
.search {
    flex: none;
    width: var(--search);
    height: 19px;
    margin-left: 8px;
    display: flex;
    align-items: center;
    background-color: #3a3a3a;
    border-radius: 10px;
    padding: 0 2px 0 7px;
    box-sizing: border-box;
}
.search-ico {
    width: 11px;
    height: 11px;
    flex: none;
}
.search-text {
    margin-left: 5px;
    font-size: 9px;
    color: #d8d8d8;
}
.search-bing {
    width: 13px;
    height: 13px;
    margin-left: auto;
    margin-right: 3px;
}
.pin {
    position: relative;
    flex: none;
    width: var(--pin);
    height: 25px;
    display: flex;
    align-items: center;
    justify-content: center;
}
.pin svg {
    width: 15px;
    height: 15px;
}
.pin-active {
    background-color: #2d2d2d;
    border-radius: 3px;
}
.pin-active::after,
.pin-open::after {
    content: "";
    position: absolute;
    bottom: 0;
    height: 2px;
    border-radius: 1px;
}
.pin-active::after {
    width: 12px;
    background-color: #3aa7e8;
}
.pin-open::after {
    width: 3px;
    background-color: #8a8a8a;
}
.tray {
    margin-left: auto;
    margin-right: 12px;
    display: flex;
    align-items: center;
    gap: 4px;
}
.tray-ico {
    width: 12px;
    height: 12px;
}
.tray-ico + .tray-ico {
    margin-right: -1px;
}
.tray-chevron {
    width: 8px;
    height: 8px;
    margin-right: 5.5px;
}
.clock {
    display: flex;
    flex-direction: column;
    align-items: flex-end;
    margin-left: 4px;
    font-size: 8px;
    line-height: 10px;
}
.win-portal .clock {
    margin-left: 8px;
}
.notify {
    width: 11px;
    height: 11px;
    border-radius: 50%;
    background-color: #5cc5f5;
    color: #111;
    font-size: 7px;
    line-height: 11px;
    text-align: center;
}
```
